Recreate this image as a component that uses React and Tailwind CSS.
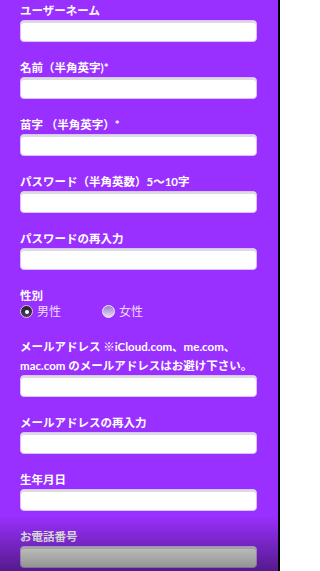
import { useState } from 'react';

const font = { fontFamily: 'Lato, "Noto Sans CJK JP", "Noto Sans", sans-serif' };

function Field({ label }) {
  return (
    <div className="mb-[16px]">
      <div className="text-white font-bold text-[11.5px] leading-[19px]">{label}</div>
      <input
        type="text"
        className="block w-full h-[22px] bg-white rounded-[4px] border border-[#d9c2ff] shadow-[inset_0_2px_0_#dcdcdc] outline-none px-2 text-[12px]"
      />
    </div>
  );
}

function Radio({ checked, onClick, label, className = '' }) {
  return (
    <button onClick={onClick} className={`flex items-center ${className}`}>
      <span
        className={`w-[13px] h-[13px] rounded-full flex items-center justify-center border ${
          checked
            ? 'bg-gradient-to-b from-[#2a2034] to-[#4a3d5a] border-[#cfc2e0]'
            : 'bg-gradient-to-b from-[#9c82c4] to-[#e9ddfb] border-[#f2eaff]'
        }`}
      >
        {checked && <span className="w-[4px] h-[4px] rounded-full bg-white"></span>}
      </span>
      <span className="ml-[4px] text-[12px] leading-[13px] text-[#eadcff]">{label}</span>
    </button>
  );
}

export default function App() {
  const [gender, setGender] = useState('male');

  return (
    <div className="relative w-[280px] h-[571px] bg-black overflow-hidden" style={font}>
      <div className="w-[278px] h-full bg-[#9a30ff] pl-[20px] pr-[21px] pt-[1px]">
        <Field label="ユーザーネーム" />
        <Field label="名前（半角英字)*" />
        <Field label="苗字 （半角英字）*" />
        <Field label="パスワード（半角英数）5〜10字" />
        <Field label="パスワードの再入力" />

        {/* 性別 */}
        <div className="text-white font-bold text-[11.5px] leading-[19px]">性別</div>
        <div className="flex items-center h-[13px] mb-[19px]">
          <Radio checked={gender === 'male'} onClick={() => setGender('male')} label="男性" className="w-[82px]" />
          <Radio checked={gender === 'female'} onClick={() => setGender('female')} label="女性" />
        </div>

        <Field label="メールアドレス ※iCloud.com、me.com、mac.com のメールアドレスはお避け下さい。" />
        <Field label="メールアドレスの再入力" />
        <Field label="生年月日" />
        <Field label="お電話番号" />
      </div>

      {/* 下端の影 */}
      <div className="absolute left-0 bottom-0 w-[278px] h-[56px] bg-gradient-to-b from-transparent to-[rgba(0,0,0,0.45)] pointer-events-none"></div>
    </div>
  );
}
